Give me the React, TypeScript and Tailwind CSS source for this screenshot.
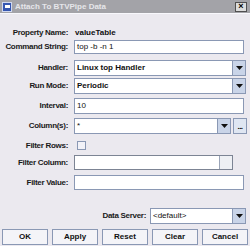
import React from "react";

const font = { fontFamily: '"Liberation Sans", Arial, sans-serif' };

function Arrow({ disabled }: { disabled?: boolean }) {
  return (
    <div
      className={`w-[13px] h-full flex items-center justify-center border-l ${
        disabled ? "border-[#9aa4b8] bg-[#eef0f4]" : "border-[#8a98b4] bg-[#c9d4e8]"
      }`}
    >
      {!disabled && (
        <svg width="7" height="4" viewBox="0 0 7 4">
          <polygon points="0,0 7,0 3.5,4" fill="#101010" />
        </svg>
      )}
    </div>
  );
}

function Label({ children }: { children: React.ReactNode }) {
  return (
    <div className="w-[68px] shrink-0 whitespace-nowrap text-right text-[8px] font-bold text-[#1a1a1a] leading-none tracking-[-0.3px]">
      {children}
    </div>
  );
}

function Field({ children, w = "w-[170px]" }: { children?: React.ReactNode; w?: string }) {
  return (
    <div className={`${w} h-full bg-white border border-[#8a98b4] flex items-center pl-[2px] text-[8px] leading-none text-[#101010] whitespace-nowrap`}>
      {children}
    </div>
  );
}

function Combo({ children, w = "w-[172px]", disabled }: { children?: React.ReactNode; w?: string; disabled?: boolean }) {
  return (
    <div className={`${w} h-full bg-white border ${disabled ? "border-[#7c8494]" : "border-[#8a98b4]"} flex items-stretch`}>
      <div className="flex-1 flex items-center pl-[2px] text-[8px] font-bold leading-none text-[#101010] whitespace-nowrap">{children}</div>
      <Arrow disabled={disabled} />
    </div>
  );
}

function Btn({ children }: { children: React.ReactNode }) {
  return (
    <div className="w-[46px] h-[16px] bg-[#f4f4f8] border border-[#8a98b4] flex items-center justify-center text-[8px] font-bold leading-none text-[#101010]">
      {children}
    </div>
  );
}

export default function App() {
  return (
    <div className="w-[250px] h-[246px] bg-[#ebe9ef] overflow-hidden relative" style={font}>
      {/* title bar */}
      <div className="h-[13px] bg-[#a3a3a8] flex items-center pl-[2px] pr-[3px]">
        <div className="w-[10px] h-[10px] bg-[#3556b0] border border-[#d0d8f0] flex items-center justify-center">
          <div className="w-[5px] h-[3px] bg-white" />
        </div>
        <div className="ml-[3px] text-[8px] text-[#e6e6ea] leading-none font-bold whitespace-nowrap">Attach To BTVPipe Data</div>
        <div className="ml-auto w-[12px] h-[10px] bg-[#dcdcdc] border border-[#505050] flex items-center justify-center text-[9px] font-bold leading-none text-black">
          ×
        </div>
      </div>
      <div className="h-[1px] bg-[#f8f8fc]" />

      <div className="flex flex-col">
        {/* Property Name */}
        <div className="mt-[13px] h-[12px] flex items-center gap-[6px]">
          <Label>Property Name:</Label>
          <div className="text-[8px] font-bold leading-none text-[#101010] pl-[1px]">valueTable</div>
        </div>
        {/* Command String */}
        <div className="mt-[1px] h-[14px] flex items-center gap-[6px]">
          <Label>Command String:</Label>
          <Field>top -b -n 1</Field>
        </div>
        {/* Handler */}
        <div className="mt-[6px] h-[16px] flex items-center gap-[6px]">
          <Label>Handler:</Label>
          <Combo>Linux top Handler</Combo>
        </div>
        {/* Run Mode */}
        <div className="mt-[2px] h-[16px] flex items-center gap-[6px]">
          <Label>Run Mode:</Label>
          <Combo>Periodic</Combo>
        </div>
        {/* Interval */}
        <div className="mt-[4px] h-[16px] flex items-center gap-[6px]">
          <Label>Interval:</Label>
          <Field>10</Field>
        </div>
        {/* Columns */}
        <div className="mt-[4px] h-[16px] flex items-center gap-[6px]">
          <Label>Column(s):</Label>
          <Combo w="w-[157px]">
            <span className="font-normal">*</span>
          </Combo>
          <div className="-ml-[4px] w-[14px] h-full bg-[#dfe6f2] border border-[#8a98b4] flex items-end justify-center pb-[4px]">
            <span className="tracking-[-0.5px] font-bold text-[8px] leading-[4px]">...</span>
          </div>
        </div>
        {/* Filter Rows */}
        <div className="mt-[6px] h-[11px] flex items-center gap-[6px]">
          <Label>Filter Rows:</Label>
          <div className="ml-[3px] w-[9px] h-[9px] bg-[#f2f2f8] border border-[#8a98b4]" />
        </div>
        {/* Filter Column */}
        <div className="mt-[4px] h-[15px] flex items-center gap-[6px]">
          <Label>Filter Column:</Label>
          <Combo w="w-[159px]" disabled />
        </div>
        {/* Filter Value */}
        <div className="mt-[5px] h-[15px] flex items-center gap-[6px]">
          <Label>Filter Value:</Label>
          <Field w="w-[170px]" />
        </div>
        {/* Data Server */}
        <div className="mt-[18px] h-[16px] flex items-center justify-end pr-[4px] gap-[4px]">
          <div className="text-[8px] font-bold leading-none text-[#1a1a1a] tracking-[-0.3px]">Data Server:</div>
          <Combo w="w-[96px]">
            <span className="font-normal">&lt;default&gt;</span>
          </Combo>
        </div>
        {/* buttons */}
        <div className="mt-[5px] flex justify-between px-[2px]">
          <Btn>OK</Btn>
          <Btn>Apply</Btn>
          <Btn>Reset</Btn>
          <Btn>Clear</Btn>
          <Btn>Cancel</Btn>
        </div>
      </div>
    </div>
  );
}
